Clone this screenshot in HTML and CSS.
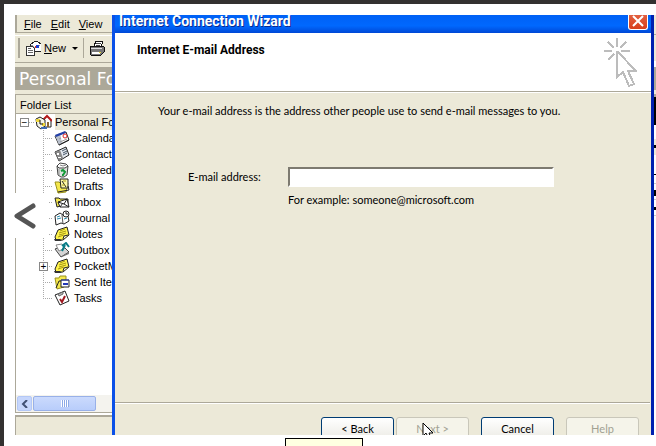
FILE: index.html
```html
<!DOCTYPE html>
<html lang="en">
<head>
<meta charset="utf-8">
<title>Internet Connection Wizard</title>
<link rel="stylesheet" href="styles.css">
</head>
<body>
<svg class="defs" aria-hidden="true">
  <symbol id="notes" viewBox="0 0 16 16">
    <path d="M4 4 13 1 15 9 9 14 2 14 1 11Z" fill="#fff34a" stroke="#222"/>
    <path d="M6 5l5-2M5 7l7-2M5 9l7-2M4 11l6-2" stroke="#a89a16"/><path d="M0 13h6l2 2H1z" fill="#333"/><path d="M9 13l1-3 4-1" stroke="#222" fill="#fff"/>
  </symbol>
</svg>
<main class="stage">
  <div class="scene">
    <section class="outlook">
      <nav class="menubar"><a href="#"><u>F</u>ile</a><a href="#"><u>E</u>dit</a><a href="#"><u>V</u>iew</a></nav>
      <div class="toolbar">
        <button class="tool new" type="button">
          <svg width="16" height="16" viewBox="0 0 16 16" shape-rendering="crispEdges"><path d="M5 5 10 1h2l4 3v7H5z" fill="#fff" stroke="#222"/><path d="M6 5l4 3 5-3" fill="none" stroke="#999"/><path d="M11 5h3v3h-3z" fill="#1a3fd0"/><path d="M10 6h1v2h-1z" fill="#d22"/><path d="M1 6h6l2 2v7H1z" fill="#fff" stroke="#333"/><path d="M3 8h3M3 10h5M3 12h5" stroke="#666"/></svg>
          <span><u>N</u>ew</span><i class="caret"></i>
        </button>
        <button class="tool print" type="button" aria-label="Print">
          <svg width="16" height="16" viewBox="0 0 16 16" shape-rendering="crispEdges"><path d="M5 6 7 1h7l-2 6z" fill="#fff" stroke="#111"/><path d="M7 3h5M7 5h4" stroke="#444"/><path d="M1 7l2-1h10l2 1v5l-3 3H2l-1-2z" fill="#777" stroke="#111"/><path d="M2 8h11v1H2z" fill="#ddd"/><path d="M3 12h8v2H3z" fill="#fff"/><path d="M10 12h2v1h-2z" fill="#e3d934"/></svg>
        </button>
      </div>
      <h1 class="banner">Personal Folders</h1>
      <h2 class="list-title">Folder List</h2>
      <ul class="tree">
        <li class="root"><span class="box">−</span><svg width="17" height="16" viewBox="0 0 17 16"><path d="M8 6 12 2l4 4v7H8z" fill="#fff" stroke="#222"/><path d="M7 7l5-5 5 5" stroke="#b51b1b" stroke-width="2" fill="none"/><path d="M12 8h2v5h-2z" fill="#863"/><path d="M1 5 5 3l5 3v6l-4 3-4-3z" fill="#f4f4e8" stroke="#222"/><path d="M1 5h4v3H1zM7 9h3v3H7z" fill="#f0d83c"/><path d="M5 6v4h3" fill="none" stroke="#111"/><path d="M6 13h6v2H6z" fill="#3e6bb5"/></svg><span class="name">Personal Folders</span></li>
        <li><svg width="16" height="16" viewBox="0 0 16 16"><path d="M1 6 12 2l3 8-10 5z" fill="#fff" stroke="#222"/><path d="M1 5 6 3l2 10-3 2z" fill="#b9c0cc"/><path d="M1 5 11 1l1 2-10 4z" fill="#2340a8"/><path d="M5 9l2-1M6 12l7-3" stroke="#999"/><circle cx="11" cy="6" r="2" fill="#fff" stroke="#d22"/><path d="M5 15l10-5" stroke="#222"/></svg><span>Calendar</span></li>
        <li><svg width="16" height="16" viewBox="0 0 16 16"><path d="M1 6 12 1l3 8-10 6z" fill="#e4e8ee" stroke="#222"/><path d="M1 6l5-2 3 8-4 3z" fill="#888"/><path d="M3 7h2v2H3zM4 11h3v1H4z" fill="#fff"/><path d="M8 5l4-2M9 7l4-2M9 9l4-2" stroke="#456"/></svg><span>Contacts</span></li>
        <li><svg width="16" height="16" viewBox="0 0 16 16"><path d="M3 4l1 9 3 2h3l3-2 1-9z" fill="#dfe3e0" stroke="#444"/><path d="M3 4l3-3 6 1 2 2-3 2H5z" fill="#fff" stroke="#444"/><path d="M6 3l3 1 3-1" stroke="#888" fill="none"/><path d="M7 9l2-1 2 2-2 3H8" fill="none" stroke="#169a39" stroke-width="2"/><path d="M5 7v6" stroke="#999"/></svg><span>Deleted Items</span></li>
        <li><svg width="16" height="16" viewBox="0 0 16 16"><path d="M1 4h4l1 1h8l-2 9-8 1z" fill="#f5e84c" stroke="#99901c"/><path d="M6 1h8v9H7z" fill="#fff9a8" stroke="#222"/><path d="M14 8l1 4-11 2" fill="none" stroke="#222"/><path d="M8 3l4 6" stroke="#222"/><path d="M9 3h3M8 7h3" stroke="#a89a16"/></svg><span>Drafts</span></li>
        <li><svg width="16" height="16" viewBox="0 0 16 16"><path d="M1 4h4l1 1h8v5L3 13z" fill="#f5e84c" stroke="#222"/><path d="M4 8l9-3 2 8H6z" fill="#fff" stroke="#222"/><path d="M4 8l6 2 3-5M6 13l3-4M15 13l-5-3" fill="none" stroke="#222"/></svg><span>Inbox</span></li>
        <li><svg width="16" height="16" viewBox="0 0 16 16"><path d="M1 6 6 3l3 2 4-3 2 9-5 3-3-1-5 2z" fill="#fff" stroke="#222"/><path d="M8 5l1 9" stroke="#555"/><path d="M3 7l3-1M3 9l4-1M10 9l3-1" stroke="#2b8cae"/><circle cx="12" cy="4" r="3" fill="#fff" stroke="#222"/><path d="M12 2v2h2" fill="none" stroke="#222"/></svg><span>Journal</span></li>
        <li><svg width="16" height="16"><use href="#notes"/></svg><span>Notes</span></li>
        <li><svg width="16" height="16" viewBox="0 0 16 16"><path d="M1 7 9 4l6 6-8 5z" fill="#d5d5d5" stroke="#444"/><path d="M2 3 8 2l3 4-6 3z" fill="#fff" stroke="#888"/><path d="M7 15l8-5v2l-7 3z" fill="#777"/><path d="M8 9l3-6M8 4l4-3 3 4" stroke="#087b86" stroke-width="2" fill="none"/></svg><span>Outbox</span></li>
        <li class="branch"><span class="box">+</span><svg width="16" height="16"><use href="#notes"/></svg><span>PocketMirror</span></li>
        <li><svg width="16" height="16" viewBox="0 0 16 16"><path d="M1 4h4l1-2h6v3l-2 8-7 2z" fill="#f5e84c" stroke="#99901c"/><path d="M2 14l3-7h9" fill="none" stroke="#222"/><path d="M7 6h8v7H7z" fill="#fff" stroke="#222"/><path d="M9 9h5v2H9z" fill="#2438b8"/><path d="M7 6h8" stroke="#2438b8"/></svg><span>Sent Items</span></li>
        <li class="last"><svg width="16" height="16" viewBox="0 0 16 16"><path d="M1 5 11 1l4 10-9 4z" fill="#fff" stroke="#222"/><path d="M4 4l5-2v2l-4 2z" fill="#bbb" stroke="#666"/><path d="M6 9l2 3 3-6" fill="none" stroke="#a01820" stroke-width="2"/></svg><span>Tasks</span></li>
      </ul>
      <div class="scrollbar"><button type="button" aria-label="Scroll left"><svg width="8" height="8" viewBox="0 0 8 8"><path d="M6 0 2 4l4 4" fill="none" stroke="#405073" stroke-width="2"/></svg></button><span class="thumb"><i></i><i></i><i></i><i></i></span></div>
      <div class="status"></div>
    </section>

    <section class="wizard">
      <header class="titlebar"><span>Internet Connection Wizard</span><button type="button" aria-label="Close"><svg width="12" height="12" viewBox="0 0 12 12"><path d="M1 1l10 10M11 1 1 11" stroke="#fff" stroke-width="2"/></svg></button></header>
      <div class="wizard-head">
        <h2>Internet E-mail Address</h2>
        <svg width="34" height="50" viewBox="0 0 34 50" fill="none" stroke="#bcbcbc" stroke-width="2" shape-rendering="crispEdges"><path d="M14 0v9M1 13h8M18 13h9M5 4l6 6M23 4l-6 6M5 22l6-6M14 13v26l6-5 6 14 5-2-6-13h8L14 13"/></svg>
      </div>
      <form class="wizard-body">
        <p>Your e-mail address is the address other people use to send e-mail messages to you.</p>
        <div class="field">
          <label for="email">E-mail address:</label>
          <input id="email" type="text">
          <p>For example: someone@microsoft.com</p>
        </div>
      </form>
      <footer class="actions">
        <button type="button">&lt; Back</button>
        <button type="button" disabled>Next &gt;</button>
        <button type="button" class="spaced">Cancel</button>
        <button type="button" class="spaced" disabled>Help</button>
        <svg class="pointer" width="12" height="18" viewBox="0 0 12 18"><path d="M1 1v13l3-3 3 6 2-1-2-5h4z" fill="#fff" stroke="#000"/></svg>
      </footer>
    </section>
    <aside class="behind"><span class="b-bars"></span><span class="b-banner"></span><span class="b-gap"></span><span class="b-dark"></span><span></span><span class="b-row"></span><span class="b-list"></span></aside>
  </div>
  <button class="prev" type="button" aria-label="Previous"><svg width="24" height="28" viewBox="0 0 24 28"><path d="M20 4 4 14l16 10" fill="none" stroke="#555" stroke-width="5" stroke-linecap="round" stroke-linejoin="round"/></svg></button>
  <div class="tip"></div>
</main>
</body>
</html>
```
FILE: styles.css
```css
* { box-sizing: border-box; }
body { margin: 0; background: #333130; font: 11px/16px "Liberation Sans", sans-serif; color: #000; }
h1, h2, p, ul { margin: 0; padding: 0; font-size: inherit; font-weight: normal; }
button { font: inherit; color: inherit; margin: 0; padding: 0; }
a { color: inherit; text-decoration: none; }
svg { flex: none; display: block; }
.defs { position: absolute; width: 0; height: 0; }

.stage { position: relative; display: flex; flex-direction: column; height: calc(100vh - 4px); margin: 4px 0 0 4px; padding: 11px 0 11px 11px; background: #fff; overflow: hidden; }
.scene { flex: 1; min-height: 0; display: grid; grid-template-columns: 97px 1fr 2px; overflow: hidden; }

.outlook { display: flex; flex-direction: column; min-width: 0; min-height: 0; overflow: hidden; background: #ece9d8; white-space: nowrap; }
.menubar { display: flex; gap: 9px; height: 18px; padding-left: 7px; border-left: 2px solid #aca899; border-bottom: 1px solid #aca899; line-height: 18px; }
.toolbar { display: flex; height: 28px; margin-top: 2px; padding: 2px 0 4px 3px; border-top: 1px solid #fff; border-bottom: 1px solid #aca899; }
.tool { display: flex; align-items: center; border: 0; background: none; }
.new { gap: 3px; padding: 0 5px; border-left: 2px solid #aca899; border-right: 1px solid #aca899; }
.print { padding-left: 5px; }
.caret { margin-left: 3px; border: 3px solid transparent; border-top-color: #000; border-bottom: 0; }
.banner { height: 23px; margin: 4px 0; padding-left: 4px; background: #aca899; color: #fff; font: 17px/24px "DejaVu Sans", sans-serif; }
.list-title { height: 20px; padding-left: 4px; border: 1px solid #aca899; border-right: 0; line-height: 20px; }
.tree { flex: 1; min-height: 0; list-style: none; background: #fff; border-left: 1px solid #aca899; }
.tree li { position: relative; display: flex; align-items: center; gap: 4px; height: 16px; padding-left: 38px; }
.tree li::before { content: ""; position: absolute; left: 27px; top: 0; width: 10px; height: 16px; background: linear-gradient(90deg, #aaa 50%, transparent 50%) 0 8px / 2px 1px repeat-x, linear-gradient(#aaa 50%, transparent 50%) 0 0 / 1px 2px repeat-y; }
.tree .last::before { height: 9px; }
.tree .root { gap: 3px; padding-left: 4px; }
.tree .root::before { left: 13px; width: 6px; background: linear-gradient(90deg, #aaa 50%, transparent 50%) 0 8px / 2px 1px repeat-x; }
.tree .box { position: relative; flex: none; width: 9px; height: 9px; border: 1px solid #888; background: #fff; font-size: 10px; line-height: 7px; text-align: center; }
.tree .root .box { margin-right: 3px; }
.tree .branch { padding-left: 23px; }
.tree .branch .box { margin-right: 2px; }
.tree .name { flex: 1; background: #ece9d8; }
.scrollbar { display: flex; gap: 1px; height: 17px; padding: 1px; border-left: 1px solid #aca899; background: #f4f3ee; }
.scrollbar button { display: grid; place-items: center; width: 15px; border: 1px solid #b4c8f6; border-radius: 2px; background: #c6d6fc; }
.thumb { display: flex; align-items: center; justify-content: center; width: 63px; border: 1px solid #98b0e8; border-radius: 2px; background: linear-gradient(#cbdafd, #b8cdfb); }
.thumb i { width: 2px; height: 7px; background: #fff; border-right: 1px solid #8caae6; }
.status { height: 23px; border-top: 1px solid #aca899; box-shadow: inset 0 2px #fff, inset 1px 4px #aca899; }

.wizard { display: flex; flex-direction: column; min-width: 0; min-height: 0; border: solid; border-width: 0 3px; border-color: transparent #0020b0 transparent #0a50e8; background: #ece9d8; font-family: Lato, sans-serif; overflow: hidden; }
.titlebar { display: flex; justify-content: space-between; height: 18px; flex: none; padding: 0 3px 0 4px; background: linear-gradient(#0061f5, #0068fe 60%, #0048d6); color: #fff; font: bold 14px/12px Roboto, sans-serif; text-shadow: 1px 1px #0a2a90; }
.titlebar button { display: grid; place-items: center; width: 20px; height: 15px; padding-bottom: 3px; border: 1px solid #fff; border-top: 0; border-radius: 0 0 3px 3px; background: linear-gradient(#e26040, #d8401c); }
.wizard-head { display: flex; justify-content: space-between; flex: none; height: 59px; padding: 5px 14px 0 22px; border-bottom: 1px solid #aca899; background: #fff; }
.wizard-head h2 { padding-top: 4px; font: bold 12px/16px Roboto, sans-serif; }
.wizard-body { flex: 1; min-height: 0; padding: 10px 0 0 43px; border-top: 1px solid #fff; }
.field { display: grid; grid-template-columns: 100px 266px; align-items: center; row-gap: 5px; margin: 48px 0 0 30px; }
.field input { width: 100%; height: 20px; padding: 0 2px; border: 2px solid; border-color: #7d7a70 #fff #fff #7d7a70; background: #fff; font: inherit; outline: 0; }
.field p { grid-column: 2; }
.actions { position: relative; display: flex; flex: none; justify-content: flex-end; gap: 2px; height: 33px; padding: 14px 11px 0 0; margin-right: 1px; border-top: 1px solid #aca899; box-shadow: inset 0 1px #fff; overflow: hidden; }
.actions button { width: 73px; height: 23px; border: 1px solid #003c74; border-radius: 3px; background: linear-gradient(#fff, #ecebe5); line-height: 16px; }
.actions button:disabled { border-color: #c9c7ba; background: #f5f4ea; color: #a1a192; }
.actions .spaced { margin-left: 10px; }
.pointer { position: absolute; right: 216px; top: 19px; }

.behind { display: grid; grid-template-rows: 52px 23px 7px 28px 14px 16px 1fr; background: #fff; }
.b-bars { background: linear-gradient(#ece9d8 19px, #aca899 19px 20px, #ece9d8 20px 46px, #fff 46px); }
.b-banner { background: #aca899; }
.b-gap { background: linear-gradient(#ece9d8 4px, #aca899 4px); }
.b-dark { background: #000; }
.b-row { background: linear-gradient(#ece9d8 6px, #000 6px 9px, #ece9d8 9px); }
.b-list { background: linear-gradient(#fff 19px, #000 19px 20px, #fff 20px 28px, #ccc 28px 29px, #fff 29px 35px, #000 35px 41px, #fff 41px 44px, #ccc 44px 45px, #fff 45px 52px, #000 52px 55px, #fff 55px 60px, #ccc 60px 61px, #fff 61px); }
.prev { position: absolute; left: 0; top: 189px; width: 44px; height: 45px; padding-left: 9px; border: 0; background: #fff; }
.tip { position: absolute; left: 281px; bottom: -10px; width: 78px; height: 18px; border: 1px solid #000; background: #ffffe1; }
```
